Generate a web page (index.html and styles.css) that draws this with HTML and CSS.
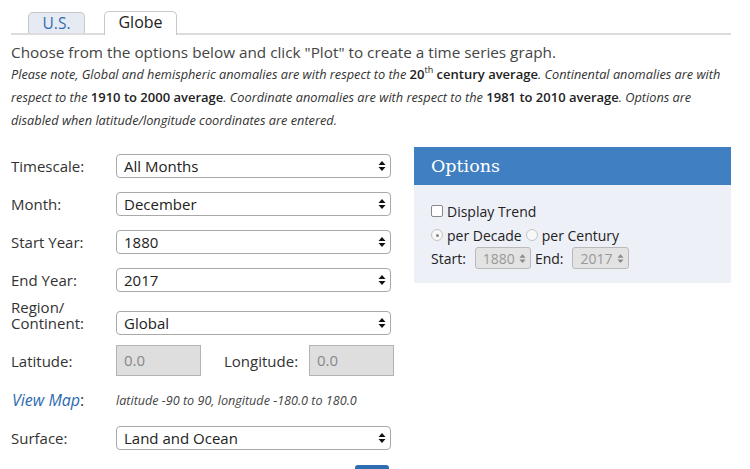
FILE: index.html
```html
<!DOCTYPE html>
<html>
<head>
<meta charset="utf-8">
<link rel="stylesheet" href="styles.css">
</head>
<body>
<div class="page">
  <div class="tabs">
    <div class="tab tab-us">U.S.</div>
    <div class="tab tab-globe">Globe</div>
  </div>
  <p class="intro">Choose from the options below and click "Plot" to create a time series graph.</p>
  <p class="note">Please note, Global and hemispheric anomalies are with respect to the <b>20<sup>th</sup> century average</b>. Continental anomalies are with respect to the <b>1910 to 2000 average</b>. Coordinate anomalies are with respect to the <b>1981 to 2010 average</b>. Options are disabled when latitude/longitude coordinates are entered.</p>

  <div class="main">
    <div class="form">
      <div class="row">
        <span class="label">Timescale:</span>
        <div class="select"><span>All Months</span><svg class="arrows" width="8" height="12" viewBox="0 0 8 12"><path d="M4 1 L7.5 5 H0.5 Z M4 11 L7.5 7 H0.5 Z" fill="#111"/></svg></div>
      </div>
      <div class="row">
        <span class="label">Month:</span>
        <div class="select"><span>December</span><svg class="arrows" width="8" height="12" viewBox="0 0 8 12"><path d="M4 1 L7.5 5 H0.5 Z M4 11 L7.5 7 H0.5 Z" fill="#111"/></svg></div>
      </div>
      <div class="row">
        <span class="label">Start Year:</span>
        <div class="select"><span>1880</span><svg class="arrows" width="8" height="12" viewBox="0 0 8 12"><path d="M4 1 L7.5 5 H0.5 Z M4 11 L7.5 7 H0.5 Z" fill="#111"/></svg></div>
      </div>
      <div class="row">
        <span class="label">End Year:</span>
        <div class="select"><span>2017</span><svg class="arrows" width="8" height="12" viewBox="0 0 8 12"><path d="M4 1 L7.5 5 H0.5 Z M4 11 L7.5 7 H0.5 Z" fill="#111"/></svg></div>
      </div>
      <div class="row row-region">
        <span class="label label-two">Region/<br>Continent:</span>
        <div class="select"><span>Global</span><svg class="arrows" width="8" height="12" viewBox="0 0 8 12"><path d="M4 1 L7.5 5 H0.5 Z M4 11 L7.5 7 H0.5 Z" fill="#111"/></svg></div>
      </div>
      <div class="row row-coords">
        <span class="label">Latitude:</span>
        <div class="coord">0.0</div>
        <span class="label-lon">Longitude:</span>
        <div class="coord">0.0</div>
      </div>
      <div class="row row-map">
        <span class="label"><a class="maplink">View Map</a>:</span>
        <span class="hint">latitude -90 to 90, longitude -180.0 to 180.0</span>
      </div>
      <div class="row row-surface">
        <span class="label">Surface:</span>
        <div class="select"><span>Land and Ocean</span><svg class="arrows" width="8" height="12" viewBox="0 0 8 12"><path d="M4 1 L7.5 5 H0.5 Z M4 11 L7.5 7 H0.5 Z" fill="#111"/></svg></div>
      </div>
      <div class="btn-row"><div class="plot-btn"></div></div>
    </div>

    <div class="options">
      <div class="options-head">Options</div>
      <div class="options-body">
        <div class="opt-row"><span class="checkbox"></span>Display Trend</div>
        <div class="opt-row"><span class="radio checked"></span>per Decade <span class="radio radio-2"></span>per Century</div>
        <div class="opt-row opt-years">
          <span class="yr-label">Start:</span>
          <div class="mini-select">1880<svg class="mini-arrows" width="7" height="11" viewBox="0 0 8 12"><path d="M4 1 L7.5 5 H0.5 Z M4 11 L7.5 7 H0.5 Z" fill="#8a8a8a"/></svg></div>
          <span class="yr-label">End:</span>
          <div class="mini-select">2017<svg class="mini-arrows" width="7" height="11" viewBox="0 0 8 12"><path d="M4 1 L7.5 5 H0.5 Z M4 11 L7.5 7 H0.5 Z" fill="#8a8a8a"/></svg></div>
        </div>
      </div>
    </div>
  </div>
</div>
</body>
</html>
```

FILE: styles.css
```css
html, body {
  margin: 0;
  padding: 0;
  background: #fff;
  overflow: hidden;
}
body {
  font-family: "Open Sans", "Liberation Sans", sans-serif;
  color: #333;
}
.page {
  padding: 11px 19px 0 11px;
  width: 720px;
}
.tabs {
  display: flex;
  align-items: flex-end;
  gap: 19px;
  padding-left: 17px;
  border-bottom: 2px solid #dcdcdc;
  height: 22px;
}
.tab {
  border: 1px solid #c9c9c9;
  border-bottom: none;
  border-radius: 5px 5px 0 0;
  text-align: center;
  font-size: 15px;
  line-height: 20px;
}
.tab-us {
  width: 55px;
  height: 20px;
  background: #e6ebf3;
  color: #2f6db3;
  font-size: 15.5px;
}
.tab-globe {
  width: 71px;
  background: #fff;
  color: #222;
  font-size: 16px;
  margin-bottom: -2px;
  height: 23px;
}
.intro {
  margin: 6px 0 0 0;
  font-size: 15.3px;
  line-height: 22px;
  color: #444;
}
.note {
  margin: 0;
  font-size: 12.75px;
  line-height: 23px;
  font-style: italic;
  color: #333;
}
.note b {
  font-style: normal;
  font-weight: 600;
  font-size: 13px;
  color: #222;
}
.note sup {
  font-size: 9px;
  line-height: 0;
  font-weight: 400;
  vertical-align: 6px;
}
.main {
  display: flex;
  align-items: flex-start;
  gap: 19px;
  margin-top: 15px;
}
.form {
  width: 384px;
  padding-top: 7px;
}
.row {
  display: flex;
  align-items: center;
  height: 24px;
  margin-bottom: 14px;
}
.label {
  width: 105px;
  flex: none;
  font-size: 15px;
  color: #333;
}
.select {
  width: 262px;
  height: 22px;
  border: 1px solid #a9a9a9;
  border-radius: 4px;
  display: flex;
  align-items: center;
  justify-content: space-between;
  padding: 0 4px 0 7px;
  font-size: 15px;
  color: #222;
  background: #fff;
}
.arrows { flex: none; }
.row-region {
  height: 36px;
  align-items: flex-end;
  margin-top: -7px;
  margin-bottom: 10px;
}
.label-two {
  align-self: flex-start;
  line-height: 16px;
}
.row-coords {
  height: 31px;
  margin-bottom: 15px;
}
.coord {
  width: 76px;
  height: 29px;
  border: 1px solid #b3b3b3;
  background: #dedede;
  color: #888;
  font-size: 15px;
  line-height: 29px;
  padding-left: 7px;
}
.label-lon {
  font-size: 15px;
  margin-left: 23px;
  width: 85px;
  color: #333;
}
.row-map {
  height: 18px;
  margin-bottom: 17px;
}
.maplink {
  color: #2c6aae;
  font-style: italic;
}
.row-map .label {
  font-size: 16px;
  margin-left: 1px;
  width: 104px;
}
.hint {
  font-size: 12.6px;
  font-style: italic;
  color: #444;
}
.row-surface {
  margin-bottom: 15px;
}
.btn-row {
  display: flex;
  padding-left: 344px;
}
.plot-btn {
  width: 34px;
  height: 26px;
  background: #2f6db3;
  border-radius: 3px;
}
.options {
  width: 317px;
  background: #eef0f8;
}
.options-head {
  height: 38px;
  background: #3f7fc2;
  color: #fff;
  font-family: "DejaVu Serif", "Liberation Serif", serif;
  font-size: 17.5px;
  line-height: 38px;
  padding-left: 17px;
}
.options-body {
  padding: 14px 17px 14px;
}
.opt-row {
  display: flex;
  align-items: center;
  height: 24px;
  font-size: 14px;
  color: #222;
}
.checkbox {
  width: 10px;
  height: 10px;
  border: 1px solid #888;
  border-radius: 2px;
  background: #fff;
  margin-right: 4px;
}
.radio {
  width: 10px;
  height: 10px;
  border: 1px solid #c4c4c4;
  border-radius: 50%;
  background: #f8f8f8;
  margin-right: 4px;
  position: relative;
}
.radio.checked::after {
  content: "";
  position: absolute;
  left: 4px;
  top: 4px;
  width: 3px;
  height: 3px;
  border-radius: 50%;
  background: #888;
}
.radio-2 {
  margin-left: 4px;
}
.opt-years {
  height: 22px;
}
.yr-label {
  margin-right: 9px;
}
.mini-select {
  display: flex;
  align-items: center;
  gap: 4px;
  height: 20px;
  border: 1px solid #b9b9b9;
  border-radius: 3px;
  background: #e3e3e3;
  color: #999;
  font-size: 14px;
  padding: 0 4px 0 7px;
  margin-right: 4px;
}
.mini-arrows { flex: none; }
```
